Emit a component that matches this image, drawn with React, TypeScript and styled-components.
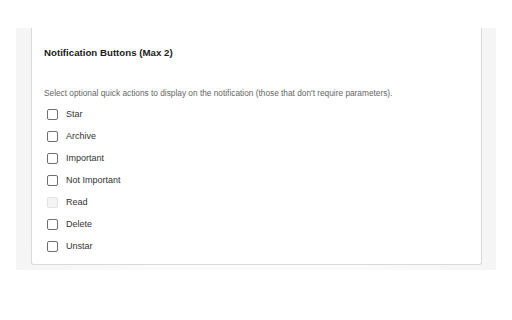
import React from 'react';
import styled, { createGlobalStyle } from 'styled-components';

const GlobalStyle = createGlobalStyle`
  html, body {
    margin: 0;
    padding: 0;
    background: #ffffff;
  }
  body {
    font-family: 'Liberation Sans', Arial, sans-serif;
  }
`;

const actions = [
  { id: 'star', label: 'Star' },
  { id: 'archive', label: 'Archive' },
  { id: 'important', label: 'Important' },
  { id: 'not-important', label: 'Not Important' },
  { id: 'read', label: 'Read', disabled: true },
  { id: 'delete', label: 'Delete' },
  { id: 'unstar', label: 'Unstar' },
];

const App = () => {
  return (
    <>
      <GlobalStyle />
      <Page>
        <Panel>
          <Card>
            <Title>Notification Buttons (Max 2)</Title>
            <Desc>
              Select optional quick actions to display on the notification (those that don't
              require parameters).
            </Desc>
            <ActionList>
              {actions.map((item) => (
                <ActionRow key={item.id}>
                  <CheckBox $disabled={item.disabled} />
                  <Label>{item.label}</Label>
                </ActionRow>
              ))}
            </ActionList>
          </Card>
        </Panel>
      </Page>
    </>
  );
};

export default App;

const Page = styled.div`
  width: 512px;
  height: 320px;
  padding: 28px 16px 0;
  box-sizing: border-box;
`;

const Panel = styled.div`
  width: 480px;
  box-sizing: border-box;
  padding: 0 14px 5px 15px;
  background: linear-gradient(to right, #f5f5f5, #fbfbfb 30%, #fbfbfb 70%, #f5f5f5);
`;

const Card = styled.div`
  background: #ffffff;
  border: 1px solid #dadada;
  border-top: none;
  border-radius: 0 0 3px 3px;
  padding: 19px 12px 7px;
`;

const Title = styled.h2`
  margin: 0;
  font-size: 9.7px;
  line-height: 12px;
  font-weight: 700;
  color: #1a1a1a;
`;

const Desc = styled.p`
  margin: 29px 0 5px;
  font-size: 8.3px;
  line-height: 10px;
  color: #666666;
`;

const ActionList = styled.ul`
  list-style: none;
  margin: 0;
  padding: 0 0 0 3px;
`;

const ActionRow = styled.li`
  display: flex;
  align-items: center;
  height: 22px;
  gap: 8px;
`;

const CheckBox = styled.span<{ $disabled?: boolean }>`
  width: 11px;
  height: 11px;
  box-sizing: border-box;
  border-radius: 2px;
  border: 1px solid ${(p) => (p.$disabled ? '#e2e2e2' : '#6f6f6f')};
  background: ${(p) => (p.$disabled ? '#f4f4f4' : '#ffffff')};
`;

const Label = styled.span`
  font-size: 9px;
  line-height: 11px;
  color: #333333;
`;
